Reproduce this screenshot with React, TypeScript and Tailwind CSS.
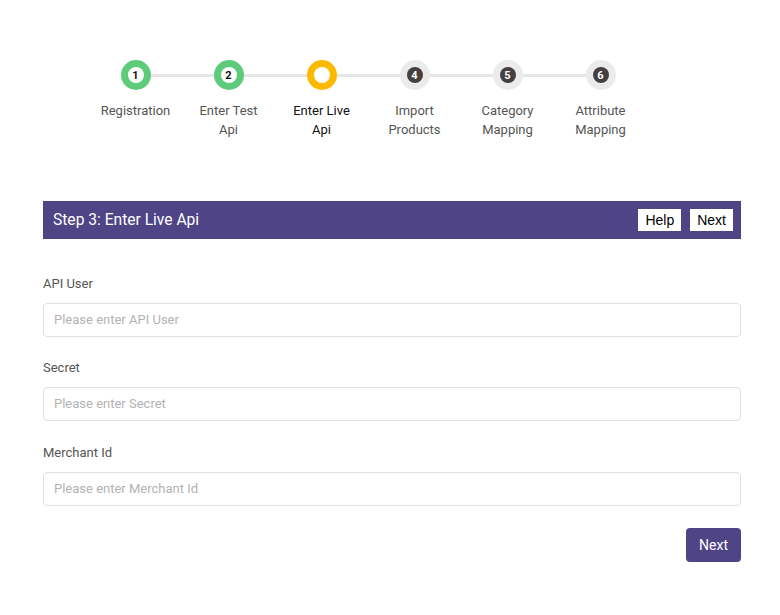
import React from "react";

const steps = [
  { n: 1, label: ["Registration"], state: "done" },
  { n: 2, label: ["Enter Test", "Api"], state: "done" },
  { n: 3, label: ["Enter Live", "Api"], state: "active" },
  { n: 4, label: ["Import", "Products"], state: "todo" },
  { n: 5, label: ["Category", "Mapping"], state: "todo" },
  { n: 6, label: ["Attribute", "Mapping"], state: "todo" },
];

function Circle({ n, state }: { n: number; state: string }) {
  if (state === "done") {
    return (
      <div className="w-[30px] h-[30px] rounded-full bg-[#5dcb7a] flex items-center justify-center shrink-0">
        <div className="w-[16px] h-[16px] rounded-full bg-white flex items-center justify-center text-[11px] font-bold text-[#111] leading-none">
          {n}
        </div>
      </div>
    );
  }
  if (state === "active") {
    return (
      <div className="w-[30px] h-[30px] rounded-full bg-[#fbba00] flex items-center justify-center shrink-0">
        <div className="w-[16px] h-[16px] rounded-full bg-white" />
      </div>
    );
  }
  return (
    <div className="w-[30px] h-[30px] rounded-full bg-[#ebebeb] flex items-center justify-center shrink-0">
      <div className="w-[16px] h-[16px] rounded-full bg-[#453f3f] flex items-center justify-center text-[11px] font-bold text-white leading-none">
        {n}
      </div>
    </div>
  );
}

function Field({ label, placeholder }: { label: string; placeholder: string }) {
  return (
    <div className="flex flex-col">
      <label className="text-[13px] leading-[19px] text-[#555]">{label}</label>
      <input
        className="mt-[10px] h-[34px] w-full rounded-[4px] border border-[#e0e0e0] px-[10px] pb-[2px] text-[13px] text-[#555] placeholder:text-[#b3b3b3] outline-none"
        placeholder={placeholder}
      />
    </div>
  );
}

export default function App() {
  return (
    <div className="w-[780px] h-[615px] bg-white" style={{ fontFamily: "Roboto, 'Noto Sans', sans-serif" }}>
      <div className="pt-[60px] pl-[89px] flex">
        {steps.map((s, i) => (
          <div key={s.n} className="w-[93px] flex flex-col items-center">
            <div className="flex items-center w-full">
              <div className={`flex-1 h-[3px] ${i === 0 ? "bg-transparent" : "bg-[#e6e6e6]"}`} />
              <Circle n={s.n} state={s.state} />
              <div className={`flex-1 h-[3px] ${i === steps.length - 1 ? "bg-transparent" : "bg-[#e6e6e6]"}`} />
            </div>
            <div
              className={`mt-[11px] text-center text-[13px] leading-[19px] ${
                s.state === "active" ? "text-[#111]" : "text-[#555]"
              }`}
            >
              {s.label.map((l) => (
                <div key={l}>{l}</div>
              ))}
            </div>
          </div>
        ))}
      </div>

      <div className="ml-[43px] w-[698px] mt-[62px]">
        <div className="h-[38px] bg-[#4e4486] flex items-center justify-between pl-[10px] pr-[8px]">
          <span className="text-white text-[15.6px] pt-[2px]">Step 3: Enter Live Api</span>
          <div className="flex gap-[9px]" style={{ fontFamily: "'Liberation Sans', Arial, sans-serif" }}>
            <button className="bg-white text-black text-[14px] h-[22px] px-[7px] leading-[22px]">Help</button>
            <button className="bg-white text-black text-[14px] h-[22px] px-[7px] leading-[22px]">Next</button>
          </div>
        </div>

        <div className="mt-[35px] flex flex-col">
          <Field label="API User" placeholder="Please enter API User" />
          <div className="mt-[21px]">
            <Field label="Secret" placeholder="Please enter Secret" />
          </div>
          <div className="mt-[22px]">
            <Field label="Merchant Id" placeholder="Please enter Merchant Id" />
          </div>
        </div>

        <div className="mt-[22px] flex justify-end">
          <button className="h-[34px] px-[13px] rounded-[4px] bg-[#4e4486] text-white text-[14px]">Next</button>
        </div>
      </div>
    </div>
  );
}
